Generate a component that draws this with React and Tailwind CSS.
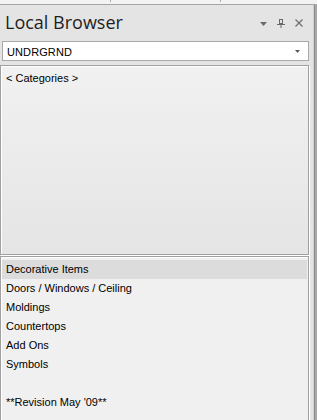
import React from "react";

function TriIcon() {
  return (
    <svg width="7" height="4" viewBox="0 0 7 4" className="block">
      <polygon points="0,0 7,0 3.5,4" fill="#6a6a6a" />
    </svg>
  );
}

function PinIcon() {
  return (
    <svg width="8" height="9" viewBox="0 0 8 9" className="block">
      <rect x="2.5" y="0.5" width="3" height="4" fill="none" stroke="#6a6a6a" strokeWidth="1" />
      <line x1="0" y1="5.5" x2="8" y2="5.5" stroke="#6a6a6a" strokeWidth="1" />
      <line x1="4" y1="6" x2="4" y2="9" stroke="#6a6a6a" strokeWidth="1" />
    </svg>
  );
}

function CloseIcon() {
  return (
    <svg width="8" height="8" viewBox="0 0 8 8" className="block">
      <line x1="0.5" y1="0.5" x2="7.5" y2="7.5" stroke="#707070" strokeWidth="1.2" />
      <line x1="7.5" y1="0.5" x2="0.5" y2="7.5" stroke="#707070" strokeWidth="1.2" />
    </svg>
  );
}

const items = [
  "Decorative Items",
  "Doors / Windows / Ceiling",
  "Moldings",
  "Countertops",
  "Add Ons",
  "Symbols",
  "",
  "**Revision May '09**",
];

export default function App() {
  return (
    <div
      className="w-[317px] h-[420px] overflow-hidden flex flex-col bg-[#e4e4e4] text-black"
      style={{ fontFamily: '"Liberation Sans", Arial, sans-serif' }}
    >
      {/* top strip */}
      <div className="h-[4px] flex bg-[#f3f3f3]">
        <div className="w-[111px] h-[2px] border-r border-[#a8a8a8]" />
        <div className="w-[110px] h-[2px] border-r border-[#a8a8a8]" />
      </div>
      <div className="h-px bg-[#a6a6a6]" />

      <div className="flex flex-1 min-h-0">
        {/* panel */}
        <div className="flex-1 flex flex-col min-w-0">
          {/* header */}
          <div className="h-[36px] flex items-center pl-[5px] pr-[10px]">
            <div
              className="flex-1 text-[18px] leading-[24px] text-[#1e1e1e] pb-[2px]"
              style={{ fontFamily: '"Open Sans", "Noto Sans", sans-serif' }}
            >
              Local Browser
            </div>
            <div className="flex items-center gap-[10px]">
              <div className="pt-[1px]">
                <TriIcon />
              </div>
              <PinIcon />
              <CloseIcon />
            </div>
          </div>

          {/* dropdown */}
          <div className="ml-[2px] w-[307px] h-[20px] border border-[#a9a9a9] bg-white flex items-center pl-[4px] pr-[8px]">
            <div className="flex-1 text-[11px] leading-[18px] pt-[1px] tracking-[0.1px]">UNDRGRND</div>
            <svg width="5" height="3" viewBox="0 0 5 3" className="block">
              <polygon points="0,0 5,0 2.5,3" fill="#5a5a5a" />
            </svg>
          </div>

          <div className="h-[4px]" />

          {/* categories box */}
          <div className="w-[309px] h-[190px] border border-[#a0a0a0] bg-gradient-to-b from-[#f1f1f1] to-[#e5e5e5] shadow-[inset_1px_1px_0_#ffffff,1px_1px_0_#ffffff] pt-[3px] pl-[5px] text-[11px] leading-[19px]">
            &lt; Categories &gt;
          </div>

          <div className="h-px" />

          {/* list */}
          <div className="w-[309px] flex-1 border-l border-t border-r border-[#a0a0a0] bg-[#f0f0f0] shadow-[inset_1px_1px_0_#ffffff,1px_0_0_#ffffff] pt-[3px] px-[1px]">
            {items.map((t, i) => (
              <div
                key={i}
                className={
                  "h-[19px] pl-[4px] text-[11px] leading-[19px] whitespace-nowrap " +
                  (i === 0 ? "bg-[#dcdcdc]" : "")
                }
              >
                {t}
              </div>
            ))}
          </div>
        </div>

        {/* right frame */}
        <div className="w-[4px] flex">
          <div className="w-px bg-[#d0d0d0]" />
          <div className="w-px bg-[#8c8c8c]" />
          <div className="w-[2px] bg-[#a8a8a8]" />
        </div>
      </div>
    </div>
  );
}
